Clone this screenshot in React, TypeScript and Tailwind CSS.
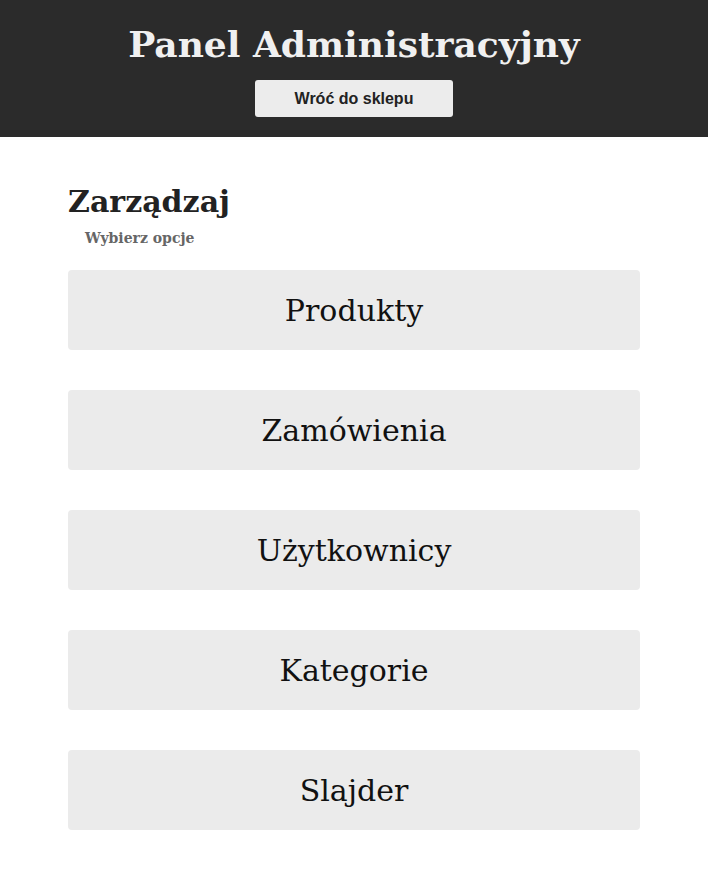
import React from "react";

const serif = { fontFamily: '"DejaVu Serif", "Liberation Serif", serif' };

export default function App() {
  const items = ["Produkty", "Zamówienia", "Użytkownicy", "Kategorie", "Slajder"];
  return (
    <div className="min-h-screen bg-white" style={serif}>
      <header className="bg-[#2b2b2b] h-[137px] flex flex-col items-center pt-[18px]">
        <h1 className="text-[#f0f0f0] text-[36px] leading-[52px] font-bold">Panel Administracyjny</h1>
        <button
          className="mt-[10px] w-[198px] h-[37px] bg-[#ececec] rounded-[3px] text-[16px] font-bold text-[#222]"
          style={{ fontFamily: '"Liberation Sans", Arial, sans-serif' }}
        >
          Wróć do sklepu
        </button>
      </header>
      <main className="ml-[68px] w-[572px]">
        <h2 className="mt-[45px] text-[30px] leading-[40px] font-bold text-[#222]">Zarządzaj</h2>
        <p className="ml-[17px] mt-[6px] text-[14px] leading-[20px] font-bold text-[#666]">Wybierz opcje</p>
        <div className="mt-[22px] flex flex-col gap-[40px]">
          {items.map((t) => (
            <div key={t} className="h-[80px] bg-[#ebebeb] rounded-[4px] flex items-center justify-center text-[30px] text-[#111]">
              {t}
            </div>
          ))}
        </div>
      </main>
    </div>
  );
}
